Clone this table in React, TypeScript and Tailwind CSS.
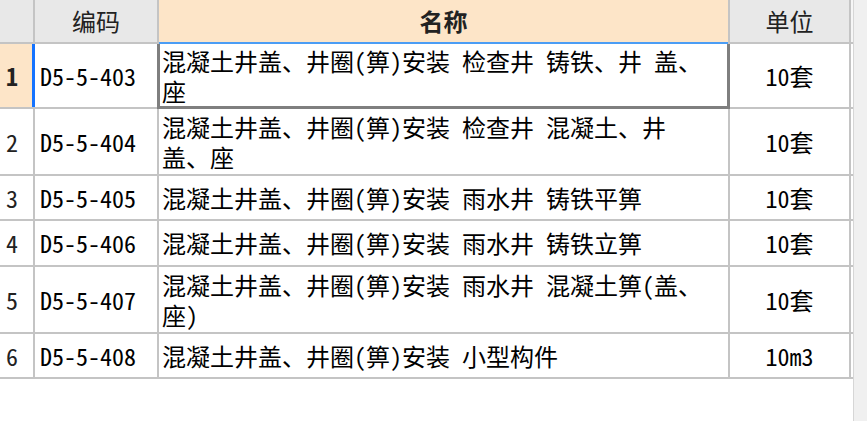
import React from 'react'

interface Row {
  no: number
  code: string
  lines: string[]
  unit: string
  height: string
}

const rows: Row[] = [
  { no: 1, code: 'D5-5-403', lines: ['混凝土井盖、井圈(箅)安装 检查井 铸铁、井 盖、', '座'], unit: '10套', height: 'h-[65px]' },
  { no: 2, code: 'D5-5-404', lines: ['混凝土井盖、井圈(箅)安装 检查井 混凝土、井', '盖、座'], unit: '10套', height: 'h-[67px]' },
  { no: 3, code: 'D5-5-405', lines: ['混凝土井盖、井圈(箅)安装 雨水井 铸铁平箅'], unit: '10套', height: 'h-[45px]' },
  { no: 4, code: 'D5-5-406', lines: ['混凝土井盖、井圈(箅)安装 雨水井 铸铁立箅'], unit: '10套', height: 'h-[46px]' },
  { no: 5, code: 'D5-5-407', lines: ['混凝土井盖、井圈(箅)安装 雨水井 混凝土箅(盖、', '座)'], unit: '10套', height: 'h-[67px]' },
  { no: 6, code: 'D5-5-408', lines: ['混凝土井盖、井圈(箅)安装 小型构件'], unit: '10m3', height: 'h-[45px]' },
]

const line = 'border-[#c4c4c4]'

export default function App() {
  return (
    <div className="flex h-[421px] w-[867px] overflow-hidden bg-white font-[family-name:'Noto_Sans_Mono_CJK_SC','Noto_Sans_CJK_SC',monospace] text-[24px] text-black">
      <div className="w-[853px] shrink-0">
        {/* header */}
        <div className={`flex h-[44px] border-b-2 ${line}`}>
          <div className={`w-[35px] shrink-0 border-r-2 ${line} bg-[#e8e8e8]`} />
          <div className={`flex w-[124px] shrink-0 items-center justify-center border-r-2 ${line} bg-[#e8e8e8] text-[#222]`}>
            编码
          </div>
          <div className={`relative flex w-[571px] shrink-0 items-center justify-center border-r-2 ${line} bg-[#fde5c8] font-bold text-[#222]`}>
            名称
            <div className="absolute -bottom-[2px] left-0 right-0 h-[2px] bg-[#4b9df5]" />
          </div>
          <div className={`flex w-[121px] shrink-0 items-center justify-center border-r-2 ${line} bg-[#e8e8e8] text-[#222]`}>
            单位
          </div>
          <div className="w-[2px] shrink-0 bg-[#f6f6f6]" />
        </div>

        {rows.map((r) => {
          const selected = r.no === 1
          return (
            <div key={r.no} className={`flex ${r.height} border-b-2 ${line}`}>
              <div
                className={`flex w-[35px] shrink-0 items-center pl-[6px] text-[#222] ${
                  selected ? 'border-r-[3px] border-[#1573ff] bg-[#fde5c8] font-bold' : `border-r-2 ${line}`
                }`}
              >
                {r.no}
              </div>
              <div className={`flex w-[124px] shrink-0 items-center border-r-2 ${line} pl-[5px]`}>{r.code}</div>
              <div className={`relative flex w-[571px] shrink-0 items-center whitespace-nowrap border-r-2 ${line} pl-[3px]`}>
                <p className="leading-[30px]">
                  {r.lines.map((t, i) => (
                    <React.Fragment key={i}>
                      {i > 0 && <br />}
                      {t}
                    </React.Fragment>
                  ))}
                </p>
                {selected && (
                  <div className="absolute -bottom-[2px] -left-[2px] -right-[2px] top-0 border-x-[3px] border-b-[3px] border-[#7f7f7f]" />
                )}
              </div>
              <div className={`flex w-[121px] shrink-0 items-center justify-center border-r-2 ${line}`}>{r.unit}</div>
              <div className="w-[2px] shrink-0" />
            </div>
          )
        })}
      </div>
      <div className="flex-1 border-l border-[#d6d6d6] bg-[#f0f0f0]" />
    </div>
  )
}
